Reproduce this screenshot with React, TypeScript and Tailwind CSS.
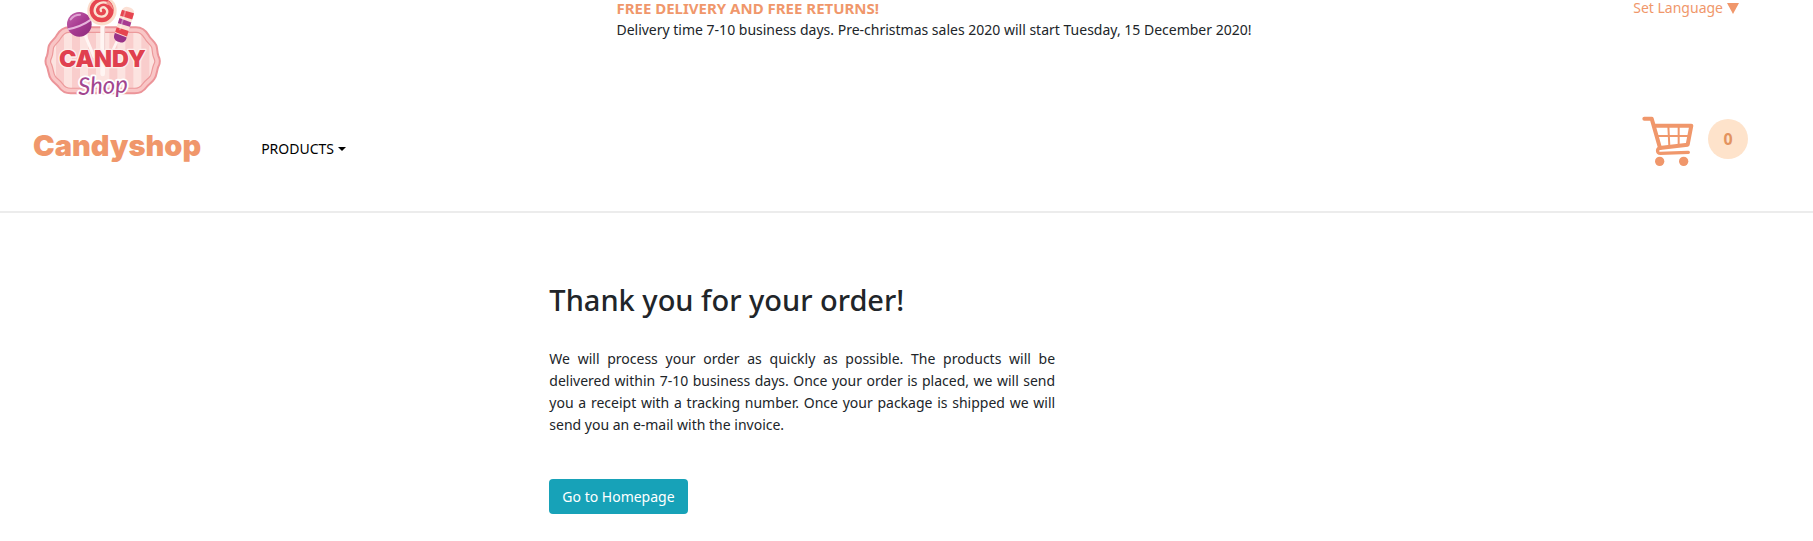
import React from "react";

function CandyLogo() {
  const badge =
    "M148 82 H348 C366 82 378 92 386 106 C392 118 404 124 409 136 C413 147 411 157 415 167 C421 178 421 190 415 200 C410 212 411 226 403 237 C397 247 387 251 380 261 C371 274 358 280 344 280 H152 C138 280 125 274 116 261 C109 251 99 247 93 237 C85 226 86 212 81 200 C75 190 75 178 81 167 C85 157 83 147 87 136 C92 124 104 118 110 106 C118 92 130 82 148 82 Z";
  return (
    <svg viewBox="60 0 372 300" className="h-[100px] w-[124px]" role="img" aria-label="Candy Shop">
      <defs>
        <clipPath id="badge-clip">
          <path d={badge} />
        </clipPath>
        <clipPath id="stick-clip">
          <rect x="293" y="20" width="38" height="108" rx="15" transform="rotate(17 312 74)" />
        </clipPath>
        <linearGradient id="ball" x1="0" y1="0" x2="1" y2="1">
          <stop offset="0" stopColor="#c265ac" />
          <stop offset="0.5" stopColor="#a83b91" />
          <stop offset="1" stopColor="#8c2a7c" />
        </linearGradient>
      </defs>
      <path d={badge} fill="#fce3e0" />
      <g clipPath="url(#badge-clip)">
        <g fill="#f9cdcc">
          <rect x="108" y="90" width="24" height="182" />
          <rect x="156" y="90" width="24" height="182" />
          <rect x="204" y="90" width="24" height="182" />
          <rect x="268" y="90" width="24" height="182" />
          <rect x="316" y="90" width="24" height="182" />
          <rect x="364" y="90" width="24" height="182" />
        </g>
        <path d={badge} fill="none" stroke="#ec9a9c" strokeWidth="34" />
        <path d={badge} fill="none" stroke="#f9c6c6" strokeWidth="27" />
      </g>
      <path d={badge} fill="none" stroke="#ec9499" strokeWidth="6" />
      <g stroke="#fff5f3" strokeLinecap="round">
        <path d="M195 105 L222 170" strokeWidth="9" />
        <path d="M248 76 V222" strokeWidth="14" />
        <path d="M292 122 L274 160" strokeWidth="8" />
      </g>
      <path d="M254 80 V150" stroke="#f0cfcf" strokeWidth="3" />
      <circle cx="178" cy="73" r="37" fill="url(#ball)" />
      <path d="M144 88 Q184 80 213 59" fill="none" stroke="#e6b4dc" strokeWidth="6" />
      <path d="M152 58 Q162 44 180 44" fill="none" stroke="#dfa2d2" strokeWidth="6" strokeLinecap="round" />
      <circle cx="246" cy="32" r="44" fill="#fbdccb" />
      <circle cx="245" cy="31" r="36" fill="#e64550" />
      <path
        d="M243 33 C238 25 249 18 257 25 C267 34 260 49 246 50 C230 51 221 38 225 25 C230 10 247 3 263 10"
        fill="none"
        stroke="#fbe2d2"
        strokeWidth="7"
        strokeLinecap="round"
      />
      <path d="M264 2 Q279 13 280 30 Q270 15 258 10 Z" fill="#f5958f" />
      <g clipPath="url(#stick-clip)">
        <rect x="270" y="10" width="90" height="130" fill="#fce0d5" />
        <path d="M300 28 L350 42 L348 62 L296 46 Z" fill="#e64550" />
        <path d="M296 53 L346 72 L342 84 L290 68 Z" fill="#a83b91" />
        <path d="M286 80 L336 96 L332 114 L280 94 Z" fill="#e64550" />
        <path d="M278 96 L330 116 L318 136 L270 120 Z" fill="#993388" />
      </g>
      <path d="M317 31 L300 88" stroke="#fff" strokeOpacity="0.35" strokeWidth="5" strokeLinecap="round" />
      <g textAnchor="middle" strokeLinejoin="round" paintOrder="stroke">
        <text
          x="247"
          y="202"
          fontSize="70"
          fill="#e0404f"
          stroke="#fdeeec"
          strokeWidth="8"
          className="font-['Inter',sans-serif] font-black"
        >
          CANDY
        </text>
        <text
          x="250"
          y="281"
          fontSize="72"
          fill="#a2468f"
          stroke="#ffffff"
          strokeWidth="11"
          transform="rotate(-3 250 281)"
          className="font-['Lato',sans-serif] font-normal italic"
        >
          Shop
        </text>
      </g>
    </svg>
  );
}

function CartIcon() {
  return (
    <svg viewBox="0 0 156 150" className="h-[50px] w-[52px]" fill="none" stroke="#f0976b" aria-hidden="true">
      <path d="M7 8 H29 L54 96" strokeWidth="12" strokeLinecap="round" strokeLinejoin="round" />
      <path d="M36 29 H148 L137 86 L53 96" strokeWidth="12" strokeLinejoin="round" />
      <path d="M79 29 L82 92 M110 29 V89 M43 60 H141" strokeWidth="6" />
      <path
        d="M54 96 C45 98 43 112 55 112 L139 109"
        strokeWidth="10"
        strokeLinecap="round"
        strokeLinejoin="round"
      />
      <circle cx="53" cy="136" r="14" fill="#f0976b" stroke="none" />
      <circle cx="125" cy="136" r="14" fill="#f0976b" stroke="none" />
    </svg>
  );
}

export default function App() {
  return (
    <div className="min-h-screen bg-white font-['Noto_Sans',sans-serif] text-sm leading-[22px] text-[#212529]">
      <header className="border-b-2 border-[#ececec] pb-[45px]">
        <div className="grid grid-cols-[34%_1fr_auto]">
          <a href="#home" className="justify-self-start pl-10">
            <CandyLogo />
          </a>
          <div className="-mt-[3px]">
            <p className="text-[15px] leading-[22px] font-bold text-[#f0976b]">FREE DELIVERY AND FREE RETURNS!</p>
            <p>Delivery time 7-10 business days. Pre-christmas sales 2020 will start Tuesday, 15 December 2020!</p>
          </div>
          <button type="button" className="-mt-[3px] mr-[74px] flex items-center gap-1 self-start text-[#f0976b]">
            Set Language
            <svg viewBox="0 0 12 11" className="h-[11px] w-3" fill="currentColor" aria-hidden="true">
              <path d="M0 0 H12 L6 11 Z" />
            </svg>
          </button>
        </div>
        <nav className="flex items-center pt-4 pr-[65px] pl-[33px]">
          <a
            href="#home"
            className="pt-[10px] font-['Inter',sans-serif] text-[29px] leading-10 font-black text-[#f0976b]"
          >
            Candyshop
          </a>
          <button type="button" className="ml-15 flex items-center gap-1 pt-4 text-black">
            PRODUCTS
            <svg viewBox="0 0 8 4" className="h-1 w-2" fill="currentColor" aria-hidden="true">
              <path d="M0 0 H8 L4 4 Z" />
            </svg>
          </button>
          <a href="#cart" aria-label="Shopping cart" className="ml-auto flex items-center gap-[14px]">
            <CartIcon />
            <span className="mb-1 flex size-10 items-center justify-center rounded-full bg-[#fee3cb] text-base font-bold text-[#e3935f]">
              0
            </span>
          </a>
        </nav>
      </header>
      <main className="ml-[30.3%] w-[27.9%] pt-[69px]">
        <h1 className="text-[29px] leading-9 font-medium whitespace-nowrap">Thank you for your order!</h1>
        <p className="mt-[30px] text-justify">
          We will process your order as quickly as possible. The products will be delivered within 7-10 business days.
          Once your order is placed, we will send you a receipt with a tracking number. Once your package is shipped we
          will send you an e-mail with the invoice.
        </p>
        <button type="button" className="mt-[43px] h-[35px] rounded-[4px] bg-[#17a2b8] px-[13px] text-white">
          Go to Homepage
        </button>
      </main>
    </div>
  );
}
